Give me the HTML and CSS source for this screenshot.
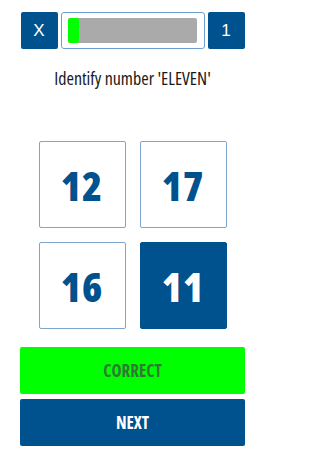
FILE: index.html
```html
<!DOCTYPE html>
<html>
<head>
<meta charset="utf-8">
<link rel="stylesheet" href="styles.css">
</head>
<body>
<div class="page">
  <div class="topbar">
    <div class="sq-btn">X</div>
    <div class="progress">
      <div class="track"><div class="fill"></div></div>
    </div>
    <div class="sq-btn">1</div>
  </div>
  <div class="title">Identify number 'ELEVEN'</div>
  <div class="grid">
    <div class="tile">12</div>
    <div class="tile">17</div>
    <div class="tile">16</div>
    <div class="tile selected">11</div>
  </div>
  <div class="actions">
    <div class="btn correct">CORRECT</div>
    <div class="btn next">NEXT</div>
  </div>
</div>
</body>
</html>
```
FILE: styles.css
```css
html, body {
  margin: 0;
  padding: 0;
  background: #ffffff;
}
body {
  font-family: "Open Sans", "DejaVu Sans", sans-serif;
  font-stretch: 75%;
  width: 265px;
  height: 471px;
}
.page {
  display: flex;
  flex-direction: column;
  align-items: center;
}
.topbar {
  display: flex;
  gap: 3px;
  margin-top: 12px;
  height: 37px;
}
.sq-btn {
  width: 37px;
  height: 37px;
  background: #00528e;
  color: #ffffff;
  border-radius: 2px;
  display: flex;
  align-items: center;
  justify-content: center;
  font-family: "Liberation Sans", Arial, sans-serif;
  font-stretch: normal;
  font-size: 17px;
}
.progress {
  width: 142px;
  height: 35px;
  border: 1px solid #6e9fd0;
  border-radius: 3px;
  display: flex;
  align-items: center;
  justify-content: center;
}
.track {
  width: 129px;
  height: 25px;
  background: #aaaaaa;
  border-radius: 2px;
  overflow: hidden;
}
.fill {
  width: 11px;
  height: 100%;
  background: #00ff00;
  border-radius: 2px;
}
.title {
  margin-top: 19px;
  font-size: 18px;
  color: #1a1a1a;
  height: 20px;
  line-height: 20px;
}
.grid {
  margin-top: 53px;
  display: grid;
  grid-template-columns: 87px 87px;
  grid-auto-rows: 87px;
  gap: 14px;
}
.tile {
  box-sizing: border-box;
  border: 1px solid #7fa5cc;
  border-radius: 2px;
  display: flex;
  align-items: center;
  justify-content: center;
  color: #00528e;
  font-size: 41px;
  font-weight: 800;
  letter-spacing: 1px;
}
.tile.selected {
  background: #00528e;
  border-color: #00528e;
  color: #ffffff;
}
.actions {
  margin-top: 18px;
  display: flex;
  flex-direction: column;
  gap: 5px;
  width: 225px;
}
.btn {
  height: 47px;
  border-radius: 2px;
  display: flex;
  align-items: center;
  justify-content: center;
  font-size: 17px;
  font-weight: 700;
}
.correct {
  background: #00ff00;
  color: #2f7a33;
}
.next {
  background: #00528e;
  color: #ffffff;
}
```
